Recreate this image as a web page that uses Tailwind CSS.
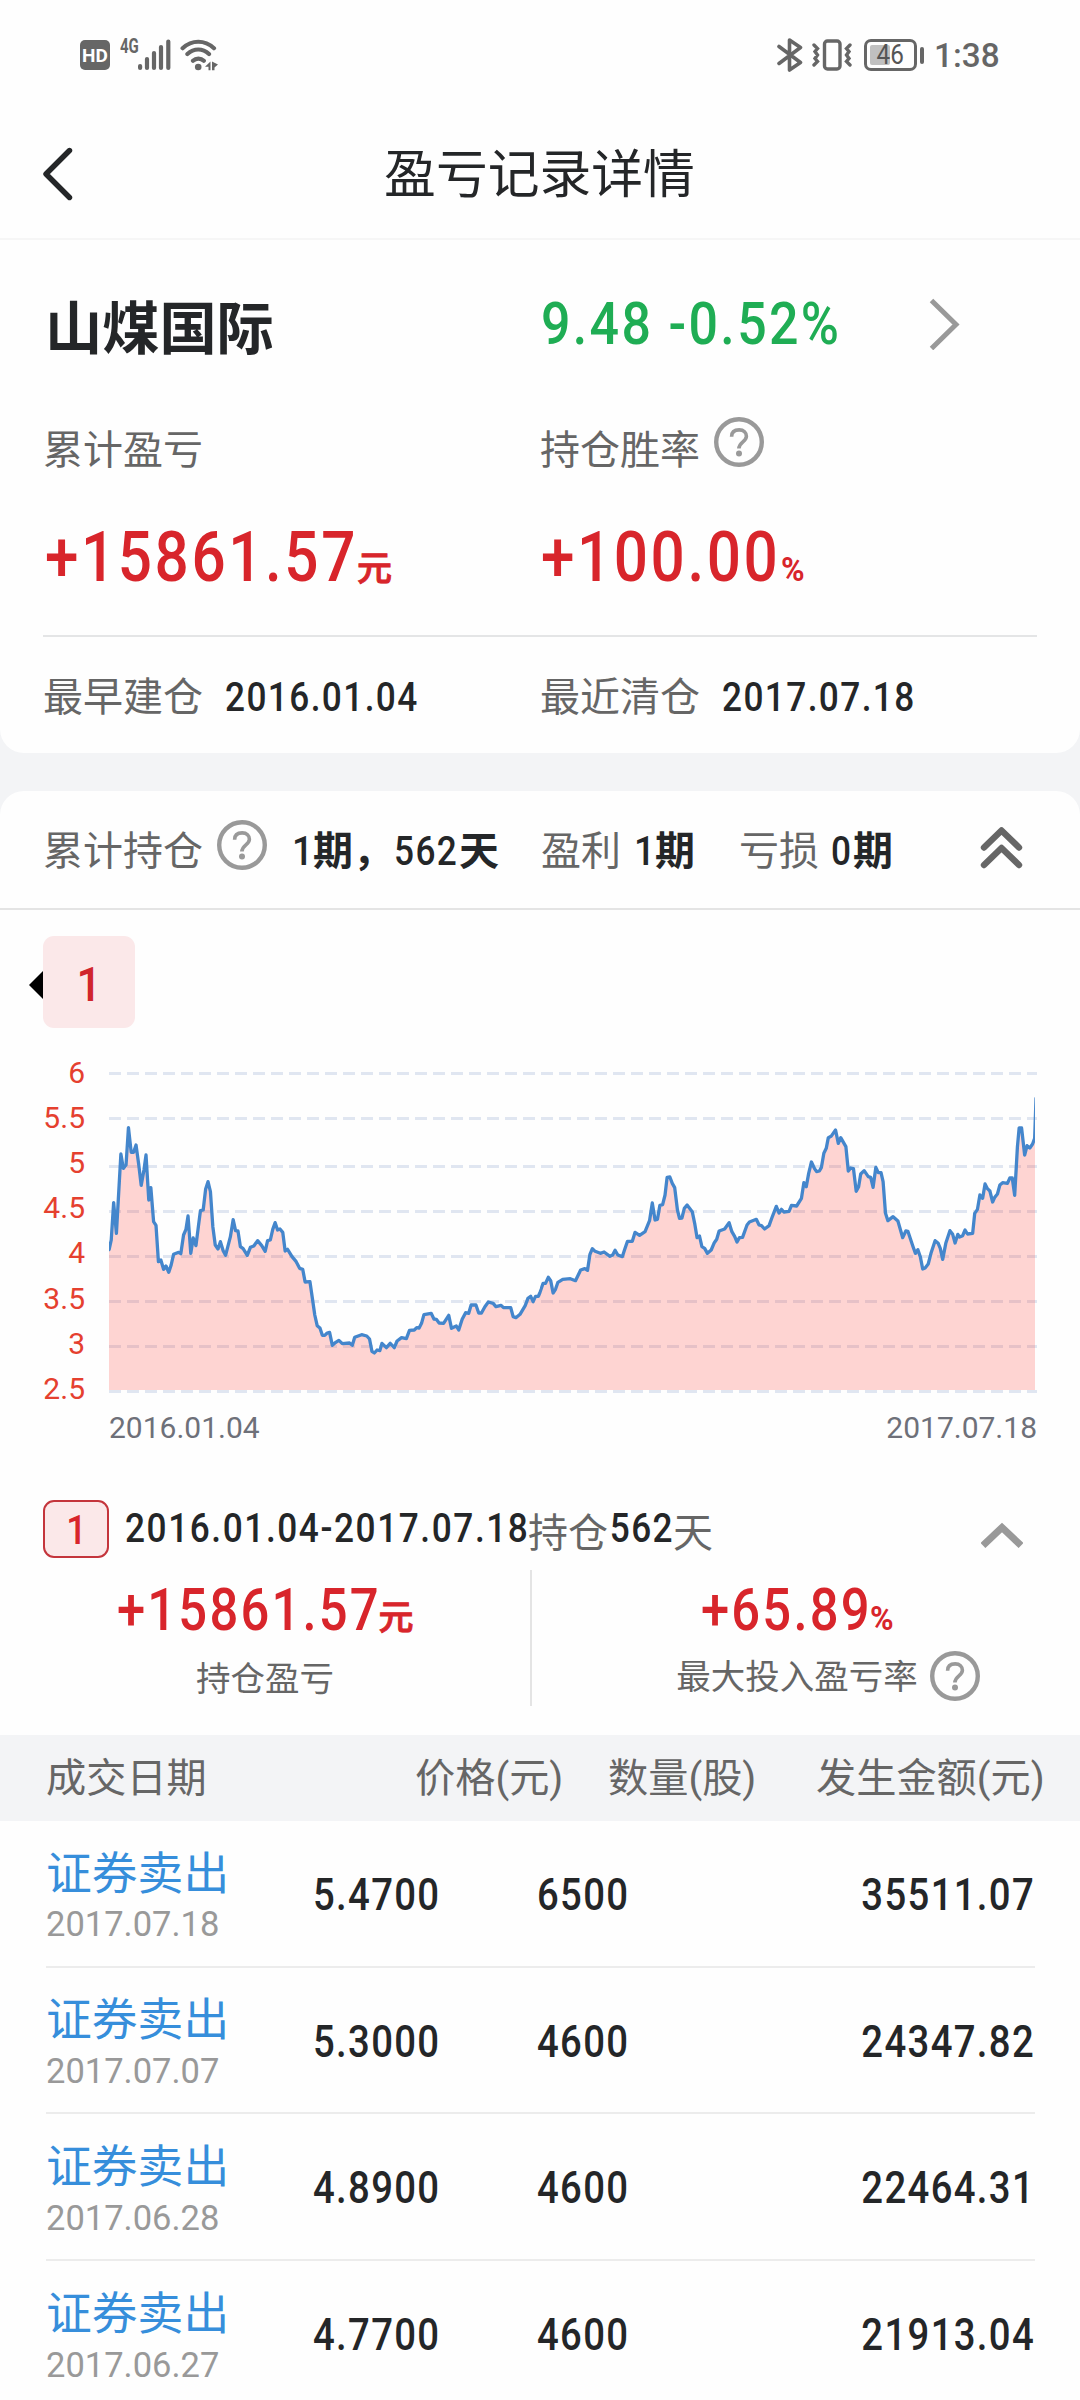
<!DOCTYPE html>
<html lang="zh-CN">
<head>
  <meta charset="UTF-8">
  <title>盈亏记录详情</title>
  <script src="https://cdn.jsdelivr.net/npm/@tailwindcss/browser@4"></script>
</head>
<body class="w-[1080px] h-[2400px] overflow-hidden bg-[#f3f4f6] font-['Roboto','Noto_Sans_CJK_SC',sans-serif] text-[40px] leading-none text-[#242628] whitespace-nowrap">
  <!-- Shared icons -->
  <svg class="hidden">
    <symbol id="help" viewBox="0 0 50 50">
      <circle cx="25" cy="25" r="22.8" fill="none" stroke="#999" stroke-width="4.4"/>
      <path d="M17.6 19.8C17.6 15 20.6 12.9 25.2 12.9C29.8 12.9 32.4 15.6 32.4 19.3C32.4 24.9 24.9 24.8 24.9 31.6" fill="none" stroke="#999" stroke-width="3.6"/>
      <circle cx="25" cy="36.6" r="3" fill="#999"/>
    </symbol>
  </svg>

  <!-- Status bar -->
  <div class="h-[110px] bg-[#fefefe] flex items-center justify-between pl-20 pr-[80px] text-[#666]">
    <div class="flex items-center">
      <div class="w-[30px] h-[30px] rounded-[5px] bg-[#666] text-white text-[19px] font-bold flex items-center justify-center">HD</div>
      <span class="w-[18px] ml-[10px] mb-[19px] text-[20px] font-bold origin-left scale-x-75">4G</span>
      <svg class="w-[34px] h-[32px]" viewBox="0 0 34 32" stroke="#666" stroke-width="4.2" stroke-linecap="round">
        <path d="M2.1 27V29M9 20V29M16 14V29M23 8V29M30.3 2.5V29"/>
      </svg>
      <svg class="w-[38px] h-[32px] ml-2" viewBox="0 0 38 32" fill="none" stroke="#666" stroke-width="4.2" stroke-linecap="round">
        <path d="M2.6 9.2C12 .6 24.5 .6 34 9.2M7.4 15C14 9 22.5 9 29 15M13 21.8C16 18.8 20.8 18.8 23.8 21.8"/>
        <circle cx="18.2" cy="28" r="3.3" fill="#666" stroke="none"/>
        <path d="M25 27.8L30.5 22.5V31.2H28.5V27.8ZM32 22.5L38 25.5L34.5 28.5V31.2H32Z" fill="#666" stroke="none"/>
      </svg>
    </div>
    <div class="flex items-center">
      <svg class="w-[26px] h-[34px]" viewBox="0 0 26 34" fill="none" stroke="#666" stroke-width="3.6" stroke-linejoin="round" stroke-linecap="round">
        <path d="M2 8.5L23.5 24.5L12.5 32V2L23.5 9.5L2 25.5"/>
      </svg>
      <svg class="w-[40px] h-[34px] ml-[9px]" viewBox="0 0 40 34" fill="none" stroke="#666" stroke-width="3.4" stroke-linecap="round">
        <rect x="12.5" y="3" width="15.5" height="28" rx="3"/>
        <path d="M2 7L5.5 10.5L3 13.5L5.5 17L3 20.5L5.5 23.5L2 27M38 7L34.5 10.5L37 13.5L34.5 17L37 20.5L34.5 23.5L38 27"/>
      </svg>
      <div class="w-[53px] h-[32px] ml-3 rounded-[7px] border-[3px] border-[#666] relative flex items-center justify-center text-[27px] text-[#555]">
        <div class="absolute left-[3px] top-[3px] w-[20px] h-[20px] rounded-[2px] bg-[#c0c0c0]"></div>
        <span class="relative -ml-px origin-center scale-x-90">46</span>
      </div>
      <div class="w-1 h-[17px] ml-[3px] mr-[10px] rounded bg-[#666]"></div>
      <span class="w-[66px] text-[34px] font-medium origin-left scale-x-98">1:38</span>
    </div>
  </div>

  <!-- Title bar -->
  <div class="h-[130px] bg-[#fefefe] border-b-2 border-[#f6f6f6] flex items-center">
    <svg class="w-[32px] h-[54px] ml-[42px]" viewBox="0 0 32 54" fill="none" stroke="#242628" stroke-width="5.4" stroke-linecap="round" stroke-linejoin="round">
      <path d="M27.5 3.5L4 27L27.5 50.5"/>
    </svg>
    <h1 class="flex-1 pr-[75px] pt-[4px] text-center text-[51.8px]">盈亏记录详情</h1>
  </div>

  <!-- Stock summary -->
  <div class="h-[513px] bg-[#fefefe] rounded-b-[24px] text-[#666]">
    <div class="h-[176px] px-[45px] flex items-center text-[#242628]">
      <div class="w-[495px] pt-[3px] text-[57.2px] font-bold">山煤国际</div>
      <div class="w-[386px] mb-[10px] pl-px flex text-[59px] font-medium text-[#1fad54]">
        <span class="origin-left scale-x-88 tracking-[.045em]">9.48 -0.52%</span>
      </div>
      <svg class="w-[34px] h-[52px] mb-[8px]" viewBox="0 0 34 52" fill="none" stroke="#999" stroke-width="5">
        <path d="M5.500 2.500L30 26.500L5.500 50.500"/>
      </svg>
    </div>
    <div class="h-[68px] pl-[43px] pt-[2px] flex items-center">
      <span class="w-[497px]">累计盈亏</span>
      <span>持仓胜率</span>
      <svg class="size-[50px] ml-[14px] mb-[18px]"><use href="#help"/></svg>
    </div>
    <div class="h-[151px] pl-[45px] pb-[5px] flex items-center text-[#d8252b] font-medium">
      <div class="w-[496px] flex items-baseline">
        <span class="w-[312px] text-[70px] origin-left scale-x-86 tracking-[.043em]">+15861.57</span>
        <span class="text-[35px] [-webkit-text-stroke:.9px]">元</span>
      </div>
      <div class="flex items-baseline">
        <span class="w-[240px] text-[70px] origin-left scale-x-86 tracking-[.043em]">+100.00</span>
        <span class="text-[34px] font-bold origin-left scale-x-94">%</span>
      </div>
    </div>
    <div class="h-[2px] mx-[43px] bg-[#e4e5e6]"></div>
    <div class="h-[116px] pl-[43px] pt-[5px] flex items-center">
      <span class="w-[182px]">最早建仓</span>
      <span class="w-[315px] text-[#242628] font-medium origin-left scale-x-88 tracking-[.04em]">2016.01.04</span>
      <span class="w-[182px]">最近清仓</span>
      <span class="text-[#242628] font-medium origin-left scale-x-88 tracking-[.04em]">2017.07.18</span>
    </div>
  </div>

  <!-- Holding periods -->
  <div class="mt-[38px] bg-[#fefefe] rounded-t-[24px]">
    <div class="h-[119px] pl-[43px] pt-[5px] border-b-2 border-[#e4e4e4] flex items-center text-[#666]">
      <span class="w-[174px]">累计持仓</span>
      <svg class="size-[50px] mb-[15px]"><use href="#help"/></svg>
      <div class="w-[274px] pl-[25px] flex text-[#242628] font-bold">
        <span class="w-[21px] font-medium origin-left scale-x-93">1</span><span class="w-[81px]">期，</span><span class="w-[65px] font-medium origin-left scale-x-88 tracking-[.04em]">562</span><span>天</span>
      </div>
      <span class="w-[93px]">盈利</span>
      <div class="w-[105px] flex text-[#242628] font-bold">
        <span class="w-[21px] font-medium origin-left scale-x-93">1</span><span>期</span>
      </div>
      <span class="w-[92px]">亏损</span>
      <div class="w-[148px] flex text-[#242628] font-bold">
        <span class="w-[22px] font-medium origin-left scale-x-88">0</span><span>期</span>
      </div>
      <svg class="w-[44px] h-[44px] mb-[9px]" viewBox="0 0 44 44" fill="none" stroke="#666" stroke-width="6.4" stroke-linecap="round" stroke-linejoin="round">
        <path d="M5 21.5L22.500 4.500L40 21.500M5 39L22.500 22L40 39"/>
      </svg>
    </div>

    <div class="pt-[26px] pl-[29px] flex items-center">
      <svg class="w-[14px] h-[28px] mt-[6px]" viewBox="0 0 14 28"><path d="M14 0L0 14L14 28Z"/></svg>
      <div class="size-[92px] rounded-[11px] bg-[#fbe8e9] pt-[4px] text-[49px] font-medium text-[#d0252c] flex items-center justify-center"><span class="scale-x-90">1</span></div>
    </div>

    <!-- Price chart -->
    <svg class="block w-[1080px] h-[420px] mt-3 text-[30px]" viewBox="0 0 1080 420">
      <g stroke="#e0e6f1" stroke-width="3" stroke-dasharray="12 6">
        <path d="M109 33.500H1037M109 78.500H1037M109 126.500H1037M109 171.500H1037M109 216.500H1037M109 261.500H1037M109 306.500H1037M109 351.500H1037"/>
      </g>
      <g fill="#e5402f" text-anchor="end">
        <text x="85" y="43">6</text>
        <text x="85" y="88">5.5</text>
        <text x="85" y="133">5</text>
        <text x="85" y="178">4.5</text>
        <text x="85" y="223">4</text>
        <text x="85" y="269">3.5</text>
        <text x="85" y="314">3</text>
        <text x="85" y="359">2.5</text>
      </g>
      <g fill="#6e7079">
        <text x="109" y="398">2016.01.04</text>
        <text x="1037" y="398" text-anchor="end">2017.07.18</text>
      </g>
      <!-- first half -->
      <svg x="109" y="0" width="431" height="350" viewBox="316.500 0 1251.500 1050" preserveAspectRatio="none">
        <path fill="#ff2d23" fill-opacity=".2" stroke="#4486cc" stroke-width="3.3" stroke-linejoin="round" vector-effect="non-scaling-stroke" d="M290 1200V650L317 628L323 600L330 488L338 580L351 342L358 385L366 375L373 263L381 337L388 337L395 315L403 375L410 436L418 390L424 345L432 480L438 443L446 545L453 556L460 665L467 660L475 688L482 678L490 697L497 675L504 643L519 637L525 641L533 585L540 568L546 528L554 640L561 594L569 617L576 560L582 512L590 510L597 448L604 425L611 455L618 560L625 615L633 627L640 605L648 632L655 646L669 590L677 539L684 572L691 573L698 620L706 626L718 646L727 622L737 618L748 602L760 617L770 634L777 602L785 600L792 568L799 548L806 570L813 567L821 577L828 633L835 628L848 650L860 665L870 685L879 688L886 726L900 725L907 775L914 825L921 857L929 864L936 886L943 886L950 879L957 877L965 916L975 907L984 901L994 911L1015 909L1023 916L1030 892L1050 884L1065 888L1073 897L1080 934L1087 939L1095 930L1103 932L1109 910L1122 923L1133 910L1145 923L1153 903L1166 893L1180 896L1189 871L1203 870L1210 863L1217 864L1224 850L1231 824L1252 820L1260 837L1267 838L1275 849L1288 850L1303 826L1311 865L1325 858L1332 870L1342 838L1352 818L1361 820L1368 795L1382 795L1390 819L1398 819L1408 800L1418 786L1432 790L1440 800L1455 796L1462 803L1483 803L1490 830L1498 833L1510 823L1525 797L1533 775L1541 769L1548 785L1555 769L1563 769L1568 757L1590 700V1200Z"/>
      </svg>
      <!-- second half -->
      <svg x="540" y="0" width="495" height="350" viewBox="0 0 1437 1050" preserveAspectRatio="none">
        <path fill="#ff2d23" fill-opacity=".2" stroke="#4486cc" stroke-width="3.3" stroke-linejoin="round" vector-effect="non-scaling-stroke" d="M-20 810L0 757L9 730L16 730L24 712L31 722L38 759L45 748L52 727L66 718L88 716L103 722L118 690L130 686L138 691L145 643L152 626L160 634L175 640L186 636L203 649L211 645L218 631L226 645L239 650L246 628L254 604L268 604L276 577L289 586L305 575L318 542L326 489L334 540L341 538L348 496L356 494L363 465L369 412L377 411L384 430L391 443L399 510L405 535L412 534L419 505L427 495L442 515L449 550L456 593L463 588L470 620L478 625L486 640L497 630L506 608L513 598L520 573L536 567L549 548L557 575L565 589L572 606L579 593L588 592L601 555L608 546L628 538L636 555L643 557L652 567L665 557L673 534L686 499L694 519L701 508L708 516L723 514L730 496L745 498L759 475L766 428L773 440L780 400L788 366L797 386L803 395L811 393L817 382L824 340L831 325L837 293L845 289L858 270L866 310L873 293L888 320L895 393L902 384L910 386L918 454L925 440L931 402L941 392L953 410L960 412L967 442L975 382L982 398L990 398L996 425L1003 520L1010 542L1025 530L1039 543L1053 593L1062 573L1068 574L1083 620L1090 640L1097 629L1104 650L1111 687L1118 684L1127 672L1135 640L1147 602L1156 610L1162 625L1169 658L1178 610L1190 572L1198 583L1205 609L1213 583L1218 591L1227 587L1234 570L1241 582L1256 580L1262 520L1270 508L1277 465L1285 475L1292 432L1299 446L1306 453L1314 486L1320 472L1328 462L1335 435L1343 428L1357 430L1364 414L1371 414L1378 466L1386 320L1391 264L1398 264L1407 345L1414 317L1422 324L1430 312L1436 295L1440 175L1460 175V1200H-20Z"/>
      </svg>
    </svg>

    <!-- Period 1 -->
    <div class="h-[98px] pt-[40px] pl-[43px] flex items-center text-[#666]">
      <div class="w-[66px] h-[58px] rounded-[11px] border-2 border-[#c4353c] bg-[#fbe8e9] pt-[4px] text-[#d8252b] font-medium flex items-center justify-center"><span class="scale-x-90">1</span></div>
      <span class="w-[402px] ml-4 text-[#242628] font-medium origin-left scale-x-88 tracking-[.045em]">2016.01.04-2017.07.18</span>
      <span class="pt-[9px] pl-px">持仓</span>
      <span class="w-[65px] pl-[2px] text-[#242628] font-medium origin-left scale-x-88 tracking-[.04em]">562</span>
      <span class="w-[308px] pt-[9px]">天</span>
      <svg class="w-[42px] h-[26px] mt-[12px]" viewBox="0 0 42 26" fill="none" stroke="#999" stroke-width="7">
        <path d="M2 23.500L21 5.500L40 23.500"/>
      </svg>
    </div>
    <div class="h-[148px] pt-3 flex text-[34.500px] text-[#666]">
      <div class="w-[532px] border-r-2 border-[#e4e4e4] flex flex-col items-center pt-[10px]">
        <div class="pl-px flex items-baseline text-[#d8252b] font-medium">
          <span class="w-[261px] text-[59px] origin-left scale-x-86 tracking-[.043em]">+15861.57</span>
          <span class="text-[35px] [-webkit-text-stroke:.9px]">元</span>
        </div>
        <span class="mt-[23px]">持仓盈亏</span>
      </div>
      <div class="w-[532px] flex flex-col items-center pt-[10px]">
        <div class="flex items-baseline text-[#d8252b] font-medium">
          <span class="w-[169px] text-[59px] origin-left scale-x-86 tracking-[.043em]">+65.89</span>
          <span class="w-[26px] text-[34px] font-bold origin-left scale-x-94">%</span>
        </div>
        <div class="mt-[12px] flex items-center gap-3 pl-[60px]">
          <span class="pt-[3px]">最大投入盈亏率</span>
          <svg class="size-[50px]"><use href="#help"/></svg>
        </div>
      </div>
    </div>
  </div>

  <!-- Trades -->
  <div class="bg-[#fefefe] pt-[29px]">
    <div class="h-[86px] bg-[#f3f4f6] pl-[46px] pt-[2px] flex items-center text-[40.200px] text-[#666]">
      <span class="w-[369px]">成交日期</span>
      <span class="w-[193px]">价格(元)</span>
      <span class="w-[208px]">数量(股)</span>
      <span>发生金额(元)</span>
    </div>
    <div id="trades" class="pl-[46px] pr-[45px]"></div>
  </div>

  <script>
    const trades = [
      ['2017.07.18', '5.4700', '6500', '35511.07'],
      ['2017.07.07', '5.3000', '4600', '24347.82'],
      ['2017.06.28', '4.8900', '4600', '22464.31'],
      ['2017.06.27', '4.7700', '4600', '21913.04'],
    ];

    document.getElementById('trades').innerHTML = trades.map(([date, price, count, amount]) => `
      <div class="h-[146.7px] pt-[5px] border-b-2 border-[#ececec] flex items-center text-[43.5px] font-medium">
        <div class="w-[267px] pt-[2px] font-normal">
          <div class="text-[45.8px] text-[#368edb]">证券卖出</div>
          <div class="mt-[10px] text-[34.5px] text-[#999]">${date}</div>
        </div>
        <span class="w-[224px] origin-left scale-x-88 tracking-[.035em]">${price}</span>
        <span class="origin-left scale-x-88 tracking-[.035em]">${count}</span>
        <span class="flex-1 text-right origin-right scale-x-88 tracking-[.035em]">${amount}</span>
      </div>`).join('');
  </script>
</body>
</html>
